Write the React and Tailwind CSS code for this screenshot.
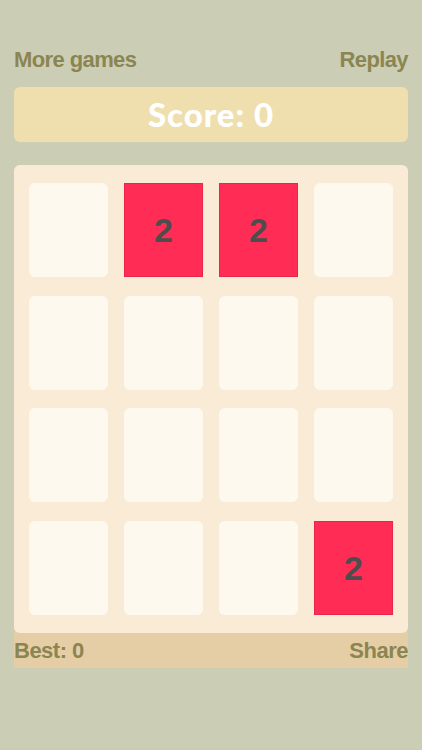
const board = [
  [0, 2, 2, 0],
  [0, 0, 0, 0],
  [0, 0, 0, 0],
  [0, 0, 0, 2],
];

const Tile = ({ value }) =>
  value ? (
    <div className="flex h-[94px] items-center justify-center border border-[#e8264c] bg-[#ff2d55]">
      <span className="text-[34px] font-bold leading-none text-[#4d4d4d]">{value}</span>
    </div>
  ) : (
    <div className="h-[94px] rounded-[6px] bg-[#fef9ef]" />
  );

export default function App() {
  return (
    <div
      className="min-h-[750px] w-full bg-[#cbcdb5] px-[14px] pt-[47px]"
      style={{ fontFamily: '"Liberation Sans", Arial, sans-serif' }}
    >
      <div className="flex items-center justify-between text-[22px] font-bold leading-[26px] tracking-[-0.6px] text-[#8b8552]">
        <span>More games</span>
        <span>Replay</span>
      </div>

      <div className="mt-[14px] flex h-[55px] items-center justify-center rounded-[6px] bg-[#efdfae]">
        <span
          className="text-[33px] font-black leading-none tracking-[1px] text-white"
          style={{ fontFamily: "Lato, sans-serif" }}
        >
          Score: 0
        </span>
      </div>

      <div className="mt-[23px] rounded-t-[6px] bg-[#e5cea6]">
        <div className="grid grid-cols-4 gap-x-[16px] gap-y-[18.7px] rounded-[6px] bg-[#faebd7] px-[15px] py-[18px]">
          {board.flat().map((v, i) => (
            <Tile key={i} value={v} />
          ))}
        </div>
        <div className="flex h-[35px] items-center justify-between text-[22px] font-bold tracking-[-0.5px] text-[#8b8552]">
          <span>Best: 0</span>
          <span>Share</span>
        </div>
      </div>
    </div>
  );
}
